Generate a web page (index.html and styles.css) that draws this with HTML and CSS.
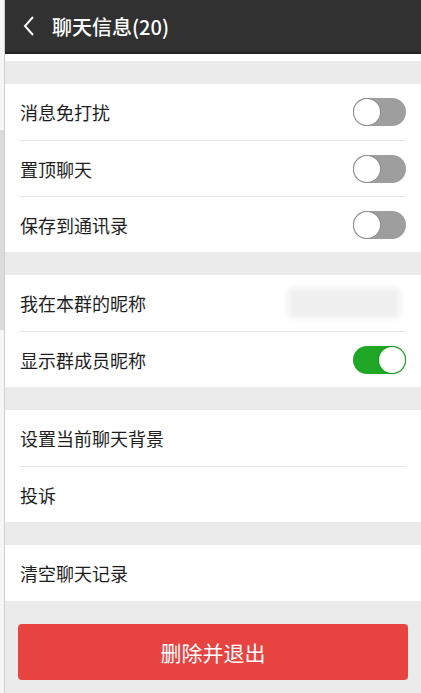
FILE: index.html
```html
<!DOCTYPE html>
<html lang="zh">
<head>
<meta charset="utf-8">
<link rel="stylesheet" href="styles.css">
</head>
<body>
<div class="page">
  <div class="under"><div class="u1"></div><div class="u2"></div><div class="u3"></div></div>
  <div class="main">
    <header class="bar">
      <svg class="back" width="14" height="22" viewBox="0 0 14 22"><path d="M11 2 L3 11 L11 20" fill="none" stroke="#fff" stroke-width="2"/></svg>
      <span class="title">聊天信息(20)</span>
    </header>
    <div class="whitestrip"></div>
    <div class="gap"></div>
    <div class="group">
      <div class="row"><span class="label">消息免打扰</span><span class="toggle"></span></div>
      <div class="row"><span class="label">置顶聊天</span><span class="toggle"></span></div>
      <div class="row"><span class="label">保存到通讯录</span><span class="toggle"></span></div>
    </div>
    <div class="gap"></div>
    <div class="group">
      <div class="row"><span class="label">我在本群的昵称</span><span class="blur"></span></div>
      <div class="row"><span class="label">显示群成员昵称</span><span class="toggle on"></span></div>
    </div>
    <div class="gap"></div>
    <div class="group">
      <div class="row"><span class="label">设置当前聊天背景</span></div>
      <div class="row"><span class="label">投诉</span></div>
    </div>
    <div class="gap"></div>
    <div class="group">
      <div class="row"><span class="label">清空聊天记录</span></div>
    </div>
    <div class="footer">
      <button class="danger">删除并退出</button>
    </div>
  </div>
</div>
</body>
</html>
```
FILE: styles.css
```css
* { box-sizing: border-box; }
html, body { margin: 0; padding: 0; height: 100%; }
body {
  font-family: "Noto Sans CJK SC", "Noto Sans", sans-serif;
  background: #ebebeb;
}
.page { display: flex; height: 693px; overflow: hidden; }
.under {
  width: 5px;
  border-right: 1px solid #cfcfcf;
  background: #f6f6f6;
  display: flex;
  flex-direction: column;
}
.u1 { height: 130px; }
.u2 { height: 200px; background: #dcdcdc; }
.u3 { flex: 1; }
.main { flex: 1; display: flex; flex-direction: column; background: #ebebeb; }
.bar {
  height: 54px;
  background: #313131;
  border-bottom: 2px solid #222;
  display: flex;
  align-items: center;
  padding-left: 17px;
}
.back { margin-right: 16px; }
.title { color: #fff; font-size: 20px; font-weight: 500; }
.whitestrip { height: 7px; background: #fff; }
.gap { height: 23px; background: #ebebeb; }
.group { background: #fff; padding: 0 15px 0 15px; }
.row {
  height: 56px;
  display: flex;
  align-items: center;
  justify-content: space-between;
  border-top: 1px solid #e6e6e6;
}
.row:first-child { border-top: none; }
.label { font-size: 18px; color: #1e1e1e; }
.toggle {
  width: 53px;
  height: 28px;
  border-radius: 14px;
  background: #9e9e9e;
  position: relative;
}
.toggle::after {
  content: "";
  position: absolute;
  left: 1px;
  top: 1px;
  width: 26px;
  height: 26px;
  border-radius: 50%;
  background: #fff;
  box-shadow: 0 0 0 1px #8f8f8f;
}
.toggle.on { background: #1fa625; }
.toggle.on::after { left: 26px; box-shadow: 0 0 0 1px #1a9a20; }
.blur {
  width: 112px;
  height: 30px;
  background: #efefef;
  filter: blur(3px);
  margin-right: 6px;
}
.footer { flex: 1; padding: 23px 13px 0 13px; background: #ebebeb; }
.danger {
  width: 100%;
  height: 56px;
  border: none;
  border-radius: 4px;
  background: #e64341;
  color: #fff;
  font-family: "Noto Sans CJK SC", sans-serif;
  font-size: 21px;
}
```
